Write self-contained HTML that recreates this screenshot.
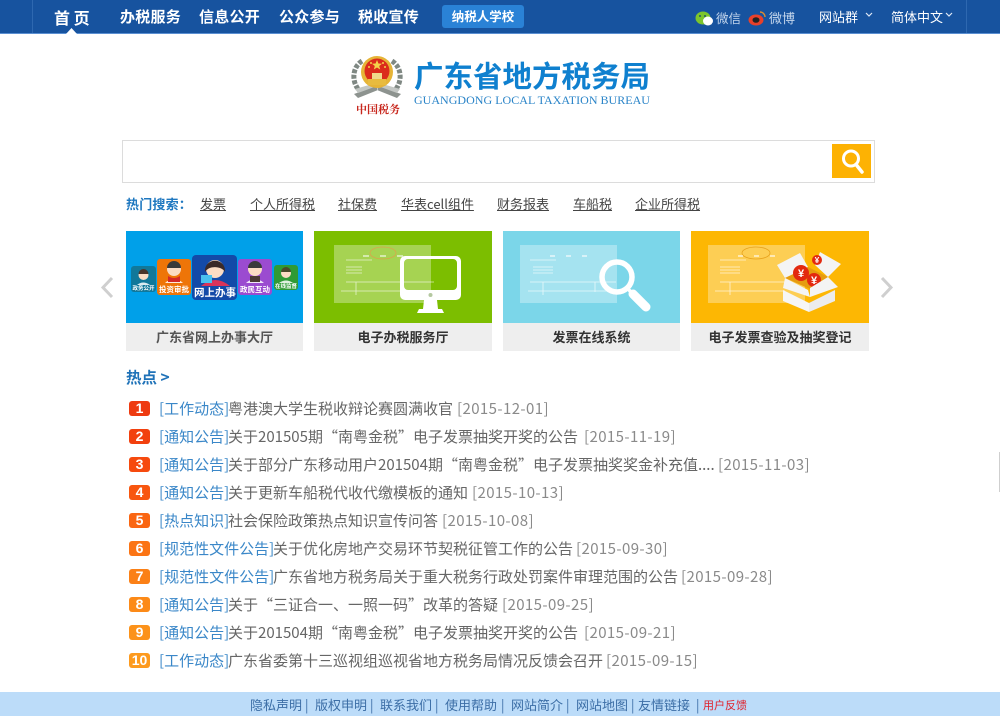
<!DOCTYPE html>
<html lang="zh"><head><meta charset="utf-8"><title>广东省地方税务局</title>
<style>
html,body{margin:0;padding:0;background:#fff}
body{width:1000px;height:716px;position:relative;overflow:hidden;font-family:"Noto Sans CJK SC","Liberation Sans",sans-serif}
.a{position:absolute;white-space:nowrap}
.n{top:5px;line-height:24px;font-size:15px;font-weight:700;color:#fff;letter-spacing:.25px}
.h{top:195px;line-height:18px;font-size:13px;color:#444;text-decoration:underline}
.r{height:22px;line-height:24px;font-size:15px;color:#666}
.c{color:#3a87c8}.d{color:#8a8a8a;letter-spacing:.4px}
.b{left:129px;width:21px;height:15px;border-radius:3px;color:#fff;font:700 14px/15px "Liberation Sans",sans-serif;text-align:center}
.l{top:323px;height:28px;line-height:28px;background:#eee;color:#444;font-size:13px;font-weight:700;text-align:center}
.f{top:694px;line-height:22px;font-size:13px;color:#3c6ea6}
svg{position:absolute;left:0;top:0}
</style></head><body>
<div class="a" style="left:0;top:0;width:1000px;height:34px;background:#17539f;border-bottom:1px solid #5a8fd2;box-sizing:border-box"></div>
<div class="a" style="left:32px;top:0;width:1px;height:33px;background:#2e68b0"></div>
<div class="a" style="left:966px;top:0;width:1px;height:33px;background:#2e68b0"></div>
<div class="a n" style="left:54px;font-size:16px;letter-spacing:0">首 页</div>
<div class="a n" style="left:120px">办税服务</div>
<div class="a n" style="left:199px">信息公开</div>
<div class="a n" style="left:279px">公众参与</div>
<div class="a n" style="left:358px">税收宣传</div>
<div class="a" style="left:442px;top:5px;width:82px;height:23px;border-radius:3px;background:#2a82d6;color:#fff;font-size:12.5px;font-weight:700;line-height:22px;text-align:center">纳税人学校</div>
<div class="a" style="left:716px;top:7px;line-height:22px;font-size:12.5px;color:#c4d6ec">微信</div>
<div class="a" style="left:769px;top:7px;line-height:22px;font-size:13px;color:#c4d6ec">微博</div>
<div class="a" style="left:819px;top:6px;line-height:22px;font-size:13px;color:#fff">网站群</div>
<div class="a" style="left:891px;top:6px;line-height:22px;font-size:13px;color:#fff">简体中文</div>

<svg width="1000" height="716" viewBox="0 0 1000 716">
<path d="M66 34 71.500 28 77 34Z" fill="#fff"/>
<path d="M866 13 869 16 872 13M946 13 949 16 952 13" fill="none" stroke="#dfe9f6" stroke-width="1.2"/>
<ellipse cx="703" cy="18" rx="7.500" ry="6.500" fill="#7cc52c"/><ellipse cx="708" cy="21" rx="5" ry="4.500" fill="#fff"/>
<circle cx="700" cy="16" r="1" fill="#256"/><circle cx="705" cy="16" r="1" fill="#256"/>
<ellipse cx="756" cy="20" rx="7.500" ry="5.500" fill="#e8402a"/><ellipse cx="756" cy="20" rx="3.500" ry="2.800" fill="#222"/>
<path d="M760 12a5 5 0 0 1 5 5" fill="none" stroke="#d98a30" stroke-width="1.4"/>

<!-- emblem -->
<path d="M362 61C351 68 352 84 360 91M392 61C403 68 402 84 394 91" fill="none" stroke="#7f8883" stroke-width="5" stroke-dasharray="4 1.500"/>
<path d="M354 94 376 86 378 90 358 98ZM401 94 379 86 377 90 397 98Z" fill="#8d938f"/>
<path d="M355 89 376 83 377 86 358 93ZM400 89 379 83 378 86 397 93Z" fill="#c3c7c4"/>
<circle cx="377" cy="72" r="16" fill="#e6b437"/><circle cx="377" cy="71" r="12.500" fill="#db2b1c"/>
<path d="M368 79h18v6h-18z" fill="#e8bb3f"/><path d="M372 73h10v6h-10z" fill="#f0d98a"/>
<path d="M377 60l1.400 3.500 3.600.2-2.800 2.300 1 3.500-3.200-2-3.200 2 1-3.500-2.800-2.300 3.600-.2z" fill="#f4d24a"/>
<circle cx="369" cy="67" r="1" fill="#f4d24a"/><circle cx="385" cy="67" r="1" fill="#f4d24a"/><circle cx="371" cy="63" r="1" fill="#f4d24a"/><circle cx="383" cy="63" r="1" fill="#f4d24a"/>

<!-- search -->
<rect x="122.500" y="140.500" width="752" height="42" fill="#fff" stroke="#dcdcdc"/>
<rect x="832" y="144" width="39" height="34" fill="#fdb203"/>
<circle cx="851" cy="158.500" r="7.500" fill="none" stroke="#fff" stroke-width="3"/>
<path d="M856 164.500 862 172" stroke="#fff" stroke-width="3.500" stroke-linecap="round"/>

<!-- arrows -->
<path d="M112 278 103 287.500 112 297M882 278 891 287.500 882 297" fill="none" stroke="#cfcfcf" stroke-width="3"/>

<!-- card 1 -->
<rect x="126" y="231" width="177" height="92" fill="#00a0e9"/>
<rect x="131" y="266" width="25" height="26" rx="3" fill="#11789a"/>
<rect x="157" y="259" width="34" height="36" rx="3" fill="#ee7508"/>
<rect x="238" y="259" width="34" height="36" rx="3" fill="#9b4bd0"/>
<rect x="274" y="265" width="24" height="25" rx="3" fill="#2f9a35"/>
<rect x="192" y="255" width="45" height="45" rx="4" fill="#134aa8"/>
<path d="M165 283q9-8 18 0zM137 285q6-5 13 0zM246 283q9-8 18 0zM279 283q7-5 14 0z" fill="#fff" opacity=".85"/>
<path d="M201 286q14-12 29 0z" fill="#d9345a"/>
<circle cx="143.500" cy="275" r="5" fill="#fbdcc4"/><path d="M138.500 274a5 5 0 0 1 10 0z" fill="#4a342a"/>
<circle cx="174" cy="269" r="7" fill="#fbdcc4"/><path d="M167 268a7 7 0 0 1 14 0z" fill="#3a3a3a"/>
<path d="M168 276q6 4 12 0v6h-12z" fill="#d42828"/>
<circle cx="215" cy="269" r="9" fill="#fbdcc4"/><path d="M205 272c-1-15 21-15 20 0-3-6-16-7-20 0z" fill="#3a2a28"/>
<circle cx="255" cy="269" r="7" fill="#fbdcc4"/><path d="M248 268a7 7 0 0 1 14 0z" fill="#3a3a3a"/>
<path d="M250 276h10v6h-10z" fill="#4b3a36"/>
<circle cx="286" cy="273" r="5" fill="#fbdcc4"/><path d="M281 272a5 5 0 0 1 10 0z" fill="#4a4a2a"/>
<rect x="201" y="275" width="11" height="8" fill="#48c1ef"/>
<g font-weight="700" fill="#fff" text-anchor="middle">
<text x="143.500" y="290" font-size="5.500">政务公开</text>
<text x="174" y="292" font-size="7.500">投资审批</text>
<text x="215" y="296" font-size="10.500">网上办事</text>
<text x="255" y="292" font-size="7.500">政民互动</text>
<text x="286" y="288" font-size="5.500">在线监督</text>
</g>

<!-- card 2 -->
<rect x="314" y="231" width="178" height="92" fill="#7cbe00"/>
<rect x="334" y="245" width="97" height="58" fill="#fff" opacity=".32"/>
<ellipse cx="383" cy="253" rx="13" ry="6" fill="none" stroke="#d9a64a" stroke-width=".8"/>
<path d="M346 260h26M346 267h16M346 270h16M346 273h16M346 282h88M341 291h78M356 282v13" stroke="#fff" stroke-width=".8" opacity=".7" fill="none"/>
<path d="M363 256h6M380 256h6M397 256h6" stroke="#fff" stroke-width="1.500" opacity=".7"/>
<path fill-rule="evenodd" fill="#fff" d="M405 256h51a5 5 0 0 1 5 5v34a5 5 0 0 1-5 5h-51a5 5 0 0 1-5-5v-34a5 5 0 0 1 5-5zM408 259a4 4 0 0 0-4 4v23a4 4 0 0 0 4 4h45a4 4 0 0 0 4-4v-23a4 4 0 0 0-4-4z"/>
<path d="M424 300h13l1 9h-15zM419 309h23l2 4h-27z" fill="#fff"/>
<circle cx="430.500" cy="295" r="2" fill="#b4c8a0"/>

<!-- card 3 -->
<rect x="503" y="231" width="177" height="92" fill="#7bd6e9"/>
<rect x="520" y="245" width="97" height="58" fill="#fff" opacity=".32"/>
<path d="M530 260h26M533 267h20M533 270h20M533 273h20M530 282h86M528 291h80M543 282v13M595 282v10" stroke="#fff" stroke-width=".8" opacity=".75" fill="none"/>
<path d="M550 256h5M566 256h5M582 256h5" stroke="#fff" stroke-width="1.500" opacity=".75"/>
<circle cx="617" cy="277" r="15" fill="none" stroke="#fff" stroke-width="5.500"/>
<path d="M628 289 633 294" stroke="#fff" stroke-width="3.500"/>
<path d="M633 294 646 307" stroke="#fff" stroke-width="9" stroke-linecap="round"/>

<!-- card 4 -->
<rect x="691" y="231" width="178" height="92" fill="#fdb703"/>
<rect x="708" y="245" width="97" height="58" fill="#fff" opacity=".32"/>
<ellipse cx="756" cy="253" rx="14" ry="6" fill="none" stroke="#e8a21c" stroke-width=".8"/>
<path d="M720 260h26M720 267h20M720 270h20M720 273h20M720 282h70M715 291h70M730 282v13" stroke="#fff" stroke-width=".8" opacity=".75" fill="none"/>
<path d="M738 256h5M754 256h5M770 256h5" stroke="#fff" stroke-width="1.500" opacity=".75"/>
<path d="M777 265 800 253 808 267 785 278Z" fill="#f4f4f4"/>
<path d="M820 252 841 264 828 277 815 265Z" fill="#f4f4f4"/>
<path d="M785 278 808 267 828 277 810 289Z" fill="#e69c10"/>
<circle cx="801" cy="273" r="8" fill="#e3290f"/><circle cx="814" cy="280" r="7" fill="#e3290f"/><circle cx="817" cy="260" r="5" fill="#e3290f"/>
<text x="801" y="277" font-size="11" font-weight="700" fill="#fff" text-anchor="middle" font-family="Liberation Sans,sans-serif">¥</text>
<text x="814" y="284" font-size="11" font-weight="700" fill="#fff" text-anchor="middle" font-family="Liberation Sans,sans-serif">¥</text>
<text x="817" y="263" font-size="8" font-weight="700" fill="#fff" text-anchor="middle" font-family="Liberation Sans,sans-serif">¥</text>
<path d="M783 288 785 278 808 290 810 297Z" fill="#f4f4f4"/>
<path d="M838 287 828 277 810 288 810 297Z" fill="#f4f4f4"/>
<path d="M783 290 809 303 809 312 783 301Z" fill="#f6f6f6"/>
<path d="M835 290 809 303 809 312 835 301Z" fill="#ececec"/>

<rect x="999" y="452" width="1" height="40" fill="#cfcfcf"/>
</svg>

<div class="a" style="left:414px;top:56px;line-height:38px;font-size:29.500px;font-weight:700;color:#0f80cf">广东省地方税务局</div>
<div class="a" style="left:414px;top:93px;line-height:15px;font-family:'Liberation Serif',serif;font-size:12px;color:#2a84c8;letter-spacing:.02px">GUANGDONG LOCAL TAXATION BUREAU</div>
<div class="a" style="left:356px;top:101px;line-height:16px;font-family:'Noto Serif CJK SC',serif;font-weight:700;font-size:11px;color:#c8281e">中国税务</div>

<div class="a" style="left:126px;top:195px;line-height:18px;font-size:13px;font-weight:700;color:#1f78c0;letter-spacing:.2px">热门搜索：</div>
<div class="a h" style="left:200px">发票</div>
<div class="a h" style="left:250px">个人所得税</div>
<div class="a h" style="left:338px">社保费</div>
<div class="a h" style="left:401px">华表cell组件</div>
<div class="a h" style="left:497px">财务报表</div>
<div class="a h" style="left:573px">车船税</div>
<div class="a h" style="left:635px">企业所得税</div>

<div class="a l" style="left:126px;width:177px;color:#555">广东省网上办事大厅</div>
<div class="a l" style="left:314px;width:178px;color:#333">电子办税服务厅</div>
<div class="a l" style="left:503px;width:177px;color:#333">发票在线系统</div>
<div class="a l" style="left:691px;width:178px;color:#333">电子发票查验及抽奖登记</div>

<div class="a" style="left:126px;top:365px;line-height:24px;font-size:15.500px;font-weight:700;color:#1f72b8">热点 &gt;</div>

<div class="a b" style="top:401px;background:#ee3a10">1</div>
<div class="a r c" style="left:159px;top:397px">[工作动态]</div><div class="a r" style="left:228px;top:397px">粤港澳大学生税收辩论赛圆满收官</div><div class="a r d" style="left:457px;top:397px">[2015-12-01]</div>
<div class="a b" style="top:429px;background:#f2400e">2</div>
<div class="a r c" style="left:159px;top:425px">[通知公告]</div><div class="a r" style="left:228px;top:425px">关于201505期“南粤金税”电子发票抽奖开奖的公告</div><div class="a r d" style="left:584px;top:425px">[2015-11-19]</div>
<div class="a b" style="top:457px;background:#f64a0e">3</div>
<div class="a r c" style="left:159px;top:453px">[通知公告]</div><div class="a r" style="left:228px;top:453px">关于部分广东移动用户201504期“南粤金税”电子发票抽奖奖金补充值....</div><div class="a r d" style="left:718px;top:453px">[2015-11-03]</div>
<div class="a b" style="top:485px;background:#f8560f">4</div>
<div class="a r c" style="left:159px;top:481px">[通知公告]</div><div class="a r" style="left:228px;top:481px">关于更新车船税代收代缴模板的通知</div><div class="a r d" style="left:472px;top:481px">[2015-10-13]</div>
<div class="a b" style="top:513px;background:#fa6612">5</div>
<div class="a r c" style="left:159px;top:509px">[热点知识]</div><div class="a r" style="left:228px;top:509px">社会保险政策热点知识宣传问答</div><div class="a r d" style="left:442px;top:509px">[2015-10-08]</div>
<div class="a b" style="top:541px;background:#fb7414">6</div>
<div class="a r c" style="left:159px;top:537px">[规范性文件公告]</div><div class="a r" style="left:273px;top:537px">关于优化房地产交易环节契税征管工作的公告</div><div class="a r d" style="left:576px;top:537px">[2015-09-30]</div>
<div class="a b" style="top:569px;background:#fb8016">7</div>
<div class="a r c" style="left:159px;top:565px">[规范性文件公告]</div><div class="a r" style="left:273px;top:565px">广东省地方税务局关于重大税务行政处罚案件审理范围的公告</div><div class="a r d" style="left:681px;top:565px">[2015-09-28]</div>
<div class="a b" style="top:597px;background:#fc8a18">8</div>
<div class="a r c" style="left:159px;top:593px">[通知公告]</div><div class="a r" style="left:228px;top:593px">关于“三证合一、一照一码”改革的答疑</div><div class="a r d" style="left:502px;top:593px">[2015-09-25]</div>
<div class="a b" style="top:625px;background:#fc921a">9</div>
<div class="a r c" style="left:159px;top:621px">[通知公告]</div><div class="a r" style="left:228px;top:621px">关于201504期“南粤金税”电子发票抽奖开奖的公告</div><div class="a r d" style="left:584px;top:621px">[2015-09-21]</div>
<div class="a b" style="top:653px;background:#fd9a1e">10</div>
<div class="a r c" style="left:159px;top:649px">[工作动态]</div><div class="a r" style="left:228px;top:649px">广东省委第十三巡视组巡视省地方税务局情况反馈会召开</div><div class="a r d" style="left:606px;top:649px">[2015-09-15]</div>

<div class="a" style="left:0;top:692px;width:1000px;height:24px;background:#bcdcf9"></div>
<div class="a f" style="left:250px">隐私声明</div><div class="a f" style="left:305px">|</div>
<div class="a f" style="left:315px">版权申明</div><div class="a f" style="left:370px">|</div>
<div class="a f" style="left:380px">联系我们</div><div class="a f" style="left:435px">|</div>
<div class="a f" style="left:445px">使用帮助</div><div class="a f" style="left:501px">|</div>
<div class="a f" style="left:511px">网站简介</div><div class="a f" style="left:566px">|</div>
<div class="a f" style="left:576px">网站地图</div><div class="a f" style="left:631px">|</div>
<div class="a f" style="left:638px">友情链接</div><div class="a f" style="left:696px">|</div>
<div class="a f" style="left:703px;font-size:11px;color:#e0202a">用户反馈</div>
</body></html>
